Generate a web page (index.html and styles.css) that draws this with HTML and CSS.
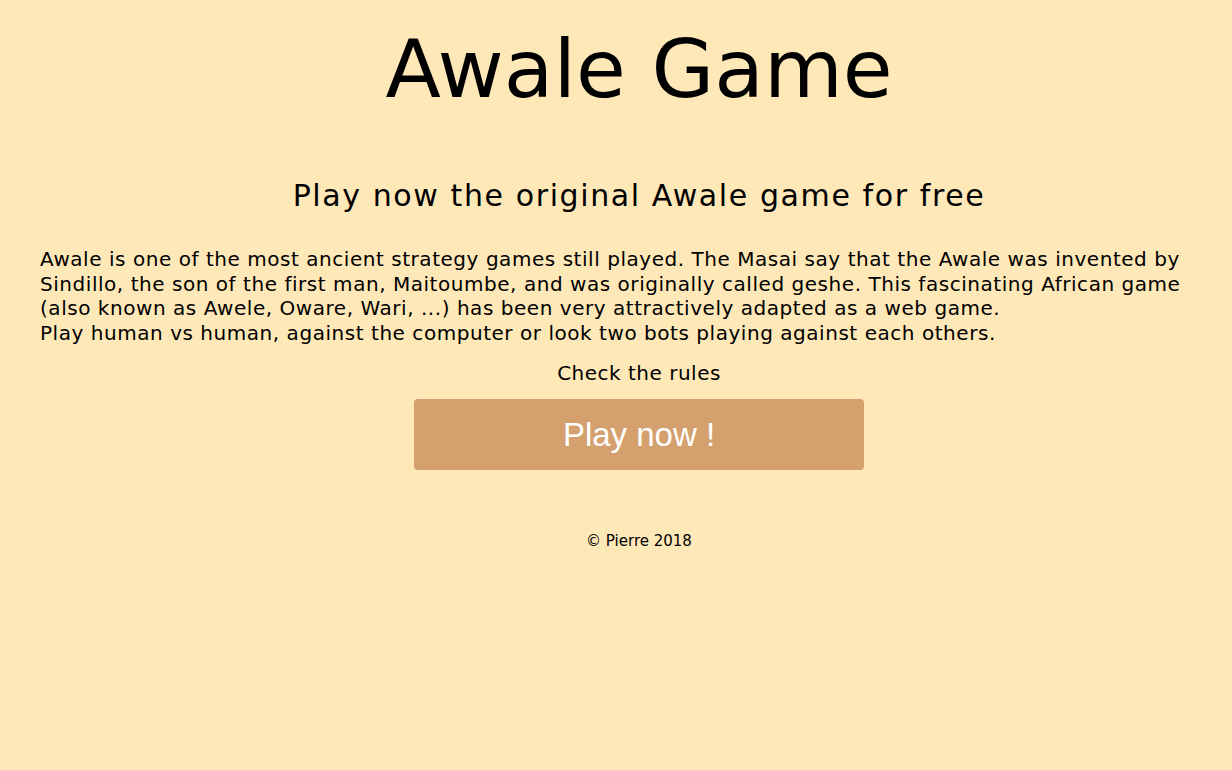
FILE: index.html
```html
<!DOCTYPE html>
<html lang="en">
<head>
<meta charset="utf-8">
<title>Awale Game</title>
<link rel="stylesheet" href="styles.css">
</head>
<body>
<main class="page">
  <h1 class="title">Awale Game</h1>
  <h2 class="subtitle">Play now the original Awale game for free</h2>
  <p class="intro">Awale is one of the most ancient strategy games still played. The Masai say that the Awale was invented by Sindillo, the son of the first man, Maitoumbe, and was originally called geshe. This fascinating African game (also known as Awele, Oware, Wari, ...) has been very attractively adapted as a web game.<br>Play human vs human, against the computer or look two bots playing against each others.</p>
  <a class="rules" href="#">Check the rules</a>
  <a class="play" href="#">Play now !</a>
  <footer class="footer">© Pierre 2018</footer>
</main>
</body>
</html>
```
FILE: styles.css
```css
html, body {
  margin: 0;
  padding: 0;
  background: #ffe8b8;
  overflow: hidden;
}
body {
  font-family: "DejaVu Sans", Verdana, sans-serif;
  color: #000;
}
.page {
  margin-left: 40px;
  margin-right: -6px;
  display: flex;
  flex-direction: column;
  align-items: center;
}
.title {
  font-weight: normal;
  font-size: 81px;
  margin: 21px 0 0;
  line-height: 1.2;
}
.subtitle {
  font-weight: normal;
  font-size: 30px;
  letter-spacing: 1.6px;
  margin: 60px 0 0;
  line-height: 36px;
}
.intro {
  align-self: stretch;
  font-size: 20px;
  letter-spacing: 0.54px;
  line-height: 24.5px;
  margin: 33px 0 0;
}
.rules {
  font-size: 20px;
  letter-spacing: 0.5px;
  color: #000;
  text-decoration: none;
  margin-top: 16px;
}
.play {
  margin-top: 14px;
  width: 450px;
  height: 71px;
  display: flex;
  align-items: center;
  justify-content: center;
  background: #d4a06e;
  border-radius: 4px;
  color: #fff;
  text-decoration: none;
  font-family: "Liberation Sans", Arial, sans-serif;
  font-size: 33px;
}
.footer {
  margin-top: 62px;
  font-size: 15px;
}
```
